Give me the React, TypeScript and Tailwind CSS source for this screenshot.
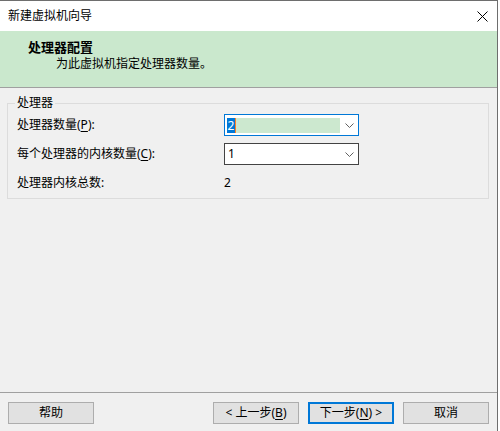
import React from "react";

const font = { fontFamily: '"Noto Sans", "Noto Sans CJK SC", sans-serif' };

function Chevron() {
  return (
    <svg width="9" height="5" viewBox="0 0 9 5" className="block">
      <path d="M0.5 0.5 L4.5 4.5 L8.5 0.5" fill="none" stroke="#606060" strokeWidth="1" />
    </svg>
  );
}

function U({ children }: { children: React.ReactNode }) {
  return <span className="underline underline-offset-2">{children}</span>;
}

function Button({ children, primary }: { children: React.ReactNode; primary?: boolean }) {
  return (
    <div
      className={
        "w-[86px] h-[22px] flex items-center justify-center bg-[#e1e1e1] text-[12px] leading-[16px] text-black " +
        (primary ? "border-2 border-[#0078d7]" : "border border-[#adadad]")
      }
    >
      {children}
    </div>
  );
}

export default function App() {
  return (
    <div className="w-[500px] h-[431px] bg-white" style={font}>
      <div className="w-[498px] h-[431px] border-t border-r border-[#6e6e6e] flex flex-col bg-[#f0f0f0]">
        {/* title bar */}
        <div className="h-[30px] bg-white flex items-center justify-between pl-[8px] pr-[9px] shrink-0">
          <span className="text-[12px] leading-[16px] text-black">新建虚拟机向导</span>
          <svg width="11" height="11" viewBox="0 0 11 11">
            <path d="M0.5 0.5 L10.5 10.5 M10.5 0.5 L0.5 10.5" stroke="#000" strokeWidth="1" />
          </svg>
        </div>
        {/* header */}
        <div className="h-[57px] bg-[#cae8cd] border-b border-[#a0a0a0] shrink-0 flex flex-col pt-[8px]">
          <span className="pl-[28px] text-[13px] leading-[16px] font-bold text-black">处理器配置</span>
          <span className="pl-[56px] mt-[1px] text-[12px] leading-[16px] text-black">为此虚拟机指定处理器数量。</span>
        </div>
        {/* body */}
        <div className="flex-1 flex flex-col">
          <div className="relative mt-[15px] ml-[7px] w-[482px] h-[96px] border border-[#dcdcdc] pt-[10px] pl-[9px] flex flex-col gap-[7px]">
            <span className="absolute left-[7px] top-[-9px] px-[2px] bg-[#f0f0f0] text-[12px] leading-[16px] text-black">
              处理器
            </span>
            <div className="flex items-center h-[22px]">
              <span className="w-[207px] text-[12px] leading-[16px] text-black">
                处理器数量(<U>P</U>):
              </span>
              <div className="w-[135px] h-[22px] border border-[#0078d7] bg-white flex items-center pl-[2px] pr-[4px]">
                <div className="w-[113px] h-[15px] bg-[#cce8cf] flex items-center">
                  <span className="bg-[#0078d7] text-white text-[12px] leading-[15px] w-[8px] text-center">2</span>
                  <span className="w-[1px] h-[15px] bg-[#ff7f27]" />
                </div>
                <div className="flex-1 flex justify-end items-center">
                  <Chevron />
                </div>
              </div>
            </div>
            <div className="flex items-center h-[22px]">
              <span className="w-[207px] text-[12px] leading-[16px] text-black">
                每个处理器的内核数量(<U>C</U>):
              </span>
              <div className="w-[135px] h-[22px] border border-[#434343] bg-white flex items-center pl-[3px] pr-[4px]">
                <span className="text-[12px] leading-[16px] text-black">1</span>
                <div className="flex-1 flex justify-end items-center">
                  <Chevron />
                </div>
              </div>
            </div>
            <div className="flex items-center h-[22px]">
              <span className="w-[207px] text-[12px] leading-[16px] text-black">处理器内核总数:</span>
              <span className="text-[12px] leading-[16px] text-black">2</span>
            </div>
          </div>
        </div>
        {/* footer */}
        <div className="h-[39px] border-t border-[#a0a0a0] shrink-0 flex pt-[9px] pl-[8px]">
          <Button>帮助</Button>
          <div className="ml-[119px] flex gap-[9px]">
            <Button>
              &lt; 上一步(<U>B</U>)
            </Button>
            <Button primary>
              下一步(<U>N</U>) &gt;
            </Button>
            <Button>取消</Button>
          </div>
        </div>
      </div>
    </div>
  );
}
